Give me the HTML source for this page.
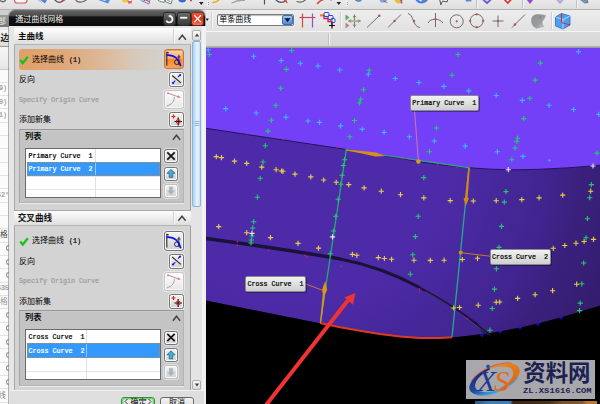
<!DOCTYPE html>
<html lang="zh"><head><meta charset="utf-8"><title>通过曲线网格</title>
<style>
html,body{margin:0;padding:0;}
body{width:600px;height:404px;overflow:hidden;position:relative;background:#dcdcdc;font-family:"Liberation Sans",sans-serif;}
.a{position:absolute;}
.m{position:absolute;font-family:"Liberation Mono",monospace;font-size:6.67px;line-height:8px;white-space:pre;color:#000;-webkit-text-stroke:.22px currentColor;}
.btn{position:absolute;box-sizing:border-box;border:1px solid #747474;border-radius:2.5px;background:linear-gradient(#f4f4f4,#d2d2d2);box-shadow:inset 0 0 0 1px #fafafa,0 0 0 1px rgba(255,255,255,.45);}
.hdr{position:absolute;box-sizing:border-box;background:linear-gradient(#fdfdfd 0%,#f0f0f0 45%,#dedede 100%);border-bottom:1px solid #b4b4b4;}
.grp{position:absolute;box-sizing:border-box;border:1px solid #b4b4b4;border-top-color:#989898;border-left-color:#a4a4a4;background:linear-gradient(#cbcbcb 0px,#c4c4c4 2px,#c3c3c3 100%);}
.list{position:absolute;box-sizing:border-box;border:1px solid #6a6a6a;background:#fff;}
.sel{position:absolute;background:#3399ff;outline:1px dotted #c98a3a;outline-offset:-1px;}
.lbl{position:absolute;box-sizing:border-box;border:1px solid #8a8a8a;border-radius:2px;background:linear-gradient(#f2f2f2,#cfcfcf);box-shadow:1px 1px 0 rgba(0,0,0,.35);}
svg text.cj{font-family:"Liberation Sans","Noto Sans CJK SC",sans-serif;}
</style></head><body>

<div class="a" style="left:0;top:0;width:600px;height:9px;background:linear-gradient(#e9e9e9,#dedede);"></div>
<div class="a" style="left:0;top:9px;width:600px;height:1px;background:#b4b4b4;"></div>
<div class="a" style="left:0;top:10px;width:600px;height:21px;background:linear-gradient(#ededed,#e1e1e1);"></div>
<div class="a" style="left:0;top:31px;width:600px;height:1px;background:#f6f6f6;"></div>
<div class="a" style="left:0;top:32px;width:600px;height:14px;background:linear-gradient(#dedede,#d6d6d6);"></div>
<div class="a" style="left:0;top:46px;width:600px;height:2px;background:linear-gradient(#bdbdbd,#8f8f8f);"></div>
<svg class="a" style="left:0;top:0" width="600" height="404" viewBox="0 0 600 404">
<defs><clipPath id="vp"><rect x="206" y="48" width="394" height="356"/></clipPath><radialGradient id="dp" cx="300" cy="150" r="330" gradientUnits="userSpaceOnUse"><stop offset="0" stop-color="#4d2ba8"/><stop offset="0.44" stop-color="#4d2ba8"/><stop offset="0.576" stop-color="#48289e"/><stop offset="0.758" stop-color="#41248f"/><stop offset="0.864" stop-color="#3a207c"/><stop offset="1" stop-color="#341d70"/></radialGradient></defs>
<g clip-path="url(#vp)">
<rect x="206" y="48" width="394" height="356" fill="#7340f8"/>
<path d="M206 128.3 L345 149.3 L384 155.5 L418 161.5 L445 165.3 L470 167.8 L490 169.2 L515 169.8 L540 169.3 L570 167.7 L600 165.2 L600 404 L206 404 Z" fill="url(#dp)"/>
<path d="M206 128.3 L345 149.3 L384 155.5 L418 161.5 L445 165.3 L470 167.8 L490 169.2 L515 169.8 L540 169.3 L570 167.7 L600 165.2" fill="none" stroke="#241458" stroke-width="1"/>
<path d="M206 300.5 L260 311.2 L320 323.2 L340 327.6 L360 331 L380 334.4 L400 337 L420 338.3 L440 338.2 L452 337.6 L470 335.6 L490 333 L520 327.6 L540 323 L560 317.6 L580 311.8 L600 305.5 L600 404 L206 404 Z" fill="#000"/>
<path d="M206 238.5 C250 244.5 300 252 340 258.9" fill="none" stroke="#1a1238" stroke-width="3.4"/>
<path d="M339 258.7 C370 264.5 395 274 420 287.7" fill="none" stroke="#1a1238" stroke-width="3"/>
<path d="M419 287.2 C440 298.5 460 311 478 325" fill="none" stroke="#1c143c" stroke-width="2.4"/>
<path d="M476 323.4 L490.5 335.2 L484 333.2 Z" fill="#1c143c" stroke="#1c143c" stroke-width="1.2" stroke-linejoin="round"/>
<path d="M425 291.5 C445 302.5 462 314 486 333.3" fill="none" stroke="#5c5490" stroke-width=".7" opacity=".8"/>
<path d="M320 323 L340 327.3 L360 330.8 L380 334 L400 336.6 L420 337.9 L440 337.9 L452 337.3" fill="none" stroke="#dc3a22" stroke-width="2"/>
<path d="M345.5 149.5 L470 167.8" fill="none" stroke="#2fa878" stroke-width="1.2"/>
<path d="M346.3 150 L320.5 322" fill="none" stroke="#1fae6e" stroke-width="1.3"/>
<path d="M469 168 L452 337" fill="none" stroke="#1fae8a" stroke-width="1.3"/>
<path d="M346 149.4 L362 151 L376 152.4 L385 155.9 L375.5 156.6 L362 153.4 L346 150.6 Z" fill="#d89018"/>
<path d="M468.2 168 L469.8 168 L467.6 198 L469 198 L465.6 206.5 L463.6 198 L465 198 Z" fill="#d08a18"/>
<path d="M325.2 281 L327.2 290 L325 294 L321.2 322.5 L320 322.5 L322.8 294 L322 290 Z" fill="#d8981a"/>
<circle cx="418.4" cy="161.5" r="2.2" fill="#d8a018"/>
<circle cx="460.8" cy="252.5" r="2" fill="#d89018"/>
<path d="M414.5 110 L418.3 160" stroke="#c878a8" stroke-width="1" fill="none"/>
<path d="M461 252.7 L490 256.2" stroke="#c07838" stroke-width="1" fill="none"/>
<path d="M306 284 L323 290.5" stroke="#c07838" stroke-width="1" fill="none"/>
<path d="M205.6 50h5.2M208.2 47.4v5.2M251.1 56.3h5.2M253.7 53.7v5.2M278.6 60.5h5.2M281.2 57.9v5.2M297.7 63.3h5.2M300.3 60.7v5.2M315.4 66h5.2M318 63.4v5.2M337.2 70h5.2M339.8 67.4v5.2M223.1 108.6h5.2M225.7 106v5.2M253.6 113h5.2M256.2 110.4v5.2M283.3 117.2h5.2M285.9 114.6v5.2M305.4 121h5.2M308 118.4v5.2M316.9 122.4h5.2M319.5 119.8v5.2M338 125.9h5.2M340.6 123.3v5.2M365.7 74.3h5.2M368.3 71.7v5.2M392.7 78.5h5.2M395.3 75.9v5.2M416.3 82.5h5.2M418.9 79.9v5.2M441.3 86.4h5.2M443.9 83.8v5.2M466.2 90.9h5.2M468.8 88.3v5.2M359.6 129.1h5.2M362.2 126.5v5.2M381.5 132.4h5.2M384.1 129.8v5.2M406.7 136.8h5.2M409.3 134.2v5.2M431.7 141h5.2M434.3 138.4v5.2M462.6 146.1h5.2M465.2 143.5v5.2M575.9 51.7h5.2M578.5 49.1v5.2M493.6 95.5h5.2M496.2 92.9v5.2M519.7 100.4h5.2M522.3 97.8v5.2M546.5 105.3h5.2M549.1 102.7v5.2M571 109.5h5.2M573.6 106.9v5.2M596.2 114.4h5.2M598.8 111.8v5.2M494.7 151.7h5.2M497.3 149.1v5.2M520.4 156.4h5.2M523 153.8v5.2" stroke="#38b8f8" stroke-width="1.1" fill="none"/>
<path d="M206.7 54.5h5.2M209.3 51.9v5.2M289.1 50.5h5.2M291.7 47.9v5.2M283.7 69.4h5.2M286.3 66.8v5.2M278.1 88.3h5.2M280.7 85.7v5.2M273.2 105.3h5.2M275.8 102.7v5.2M268.8 120.3h5.2M271.4 117.7v5.2M265.4 131.1h5.2M268 128.5v5.2M262.7 145.7h5.2M265.3 143.1v5.2M260.4 162h5.2M263 159.4v5.2M257.6 178.3h5.2M260.2 175.7v5.2M254.8 197.2h5.2M257.4 194.6v5.2M455.4 54.5h5.2M458 51.9v5.2M366.6 70.3h5.2M369.2 67.7v5.2M449.4 75.2h5.2M452 72.6v5.2M361 89.7h5.2M363.6 87.1v5.2M358 99.3h5.2M360.6 96.7v5.2M356.8 103h5.2M359.4 100.4v5.2M351.9 120.5h5.2M354.5 117.9v5.2M433.8 128h5.2M436.4 125.4v5.2M347.2 136.8h5.2M349.8 134.2v5.2M426.8 151.7h5.2M429.4 149.1v5.2M421.2 177.6h5.2M423.8 175v5.2M537.7 63.1h5.2M540.3 60.5v5.2M532.5 80.1h5.2M535.1 77.5v5.2M527.2 98.3h5.2M529.8 95.7v5.2M521.1 118.6h5.2M523.7 116v5.2M515 138.2h5.2M517.6 135.6v5.2M514.3 141.5h5.2M516.9 138.9v5.2M512.5 148h5.2M515.1 145.4v5.2M509.2 159.7h5.2M511.8 157.1v5.2M594.4 153.1h5.2M597 150.5v5.2M503.4 191.6h5.2M506 189v5.2M501.7 202.1h5.2M504.3 199.5v5.2M588.8 184.6h5.2M591.4 182v5.2M587.1 197.7h5.2M589.7 195.1v5.2M341.9 159.7h5.2M344.5 157.1v5.2M340.7 165.5h5.2M343.3 162.9v5.2M339.5 175.3h5.2M342.1 172.7v5.2M338.1 184.2h5.2M340.7 181.6v5.2M335.6 199.3h5.2M338.2 196.7v5.2M333.2 216.3h5.2M335.8 213.7v5.2M330.9 231h5.2M333.5 228.4v5.2M327.6 253.7h5.2M330.2 251.1v5.2M251.1 221.7h5.2M253.7 219.1v5.2M250.1 228h5.2M252.7 225.4v5.2M249.4 236h5.2M252 233.4v5.2M248.8 240h5.2M251.4 237.4v5.2M248.4 243h5.2M251 240.4v5.2M415.6 216.3h5.2M418.2 213.7v5.2M412.8 236.6h5.2M415.4 234v5.2M410.2 254.8h5.2M412.8 252.2v5.2M407.7 274.2h5.2M410.3 271.6v5.2M498.9 226.4h5.2M501.5 223.8v5.2M496.4 247.4h5.2M499 244.8v5.2M493.8 268.8h5.2M496.4 266.2v5.2M491.9 289.1h5.2M494.5 286.5v5.2M584.8 218.7h5.2M587.4 216.1v5.2M583.4 237.8h5.2M586 235.2v5.2M581.1 263h5.2M583.7 260.4v5.2M579.2 283.8h5.2M581.8 281.2v5.2M489.6 308.5h5.2M492.2 305.9v5.2M487.3 330.2h5.2M489.9 327.6v5.2M577.6 303.1h5.2M580.2 300.5v5.2M576.9 310.6h5.2M579.5 308v5.2" stroke="#22c870" stroke-width="1.1" fill="none"/>
<path d="M213.7 156.6h5.2M216.3 154v5.2M218.9 157.6h5.2M221.5 155v5.2M231.9 161.1h5.2M234.5 158.5v5.2M244.1 163.4h5.2M246.7 160.8v5.2M259.2 167.1h5.2M261.8 164.5v5.2M273.5 169.7h5.2M276.1 167.1v5.2M278.9 171h5.2M281.5 168.4v5.2M280.4 171.3h5.2M283 168.7v5.2M292.4 174.1h5.2M295 171.5v5.2M308.2 176.9h5.2M310.8 174.3v5.2M321.1 180h5.2M323.7 177.4v5.2M333.6 182.3h5.2M336.2 179.7v5.2M346.1 184.6h5.2M348.7 182v5.2M361.5 187.9h5.2M364.1 185.3v5.2M378.7 191.2h5.2M381.3 188.6v5.2M397.9 194.7h5.2M400.5 192.1v5.2M421.2 197.9h5.2M423.8 195.3v5.2M447.6 200.6h5.2M450.2 198v5.2M470.7 201h5.2M473.3 198.4v5.2M493.6 200.7h5.2M496.2 198.1v5.2M519.2 199.6h5.2M521.8 197v5.2M536.5 197.9h5.2M539.1 195.3v5.2M560.1 195.1h5.2M562.7 192.5v5.2M588.1 191.2h5.2M590.7 188.6v5.2M216.1 226.6h5.2M218.7 224v5.2M244.1 232.7h5.2M246.7 230.1v5.2M267.9 237.6h5.2M270.5 235v5.2M295.4 243.4h5.2M298 240.8v5.2M315.9 248.1h5.2M318.5 245.5v5.2M349.8 254.4h5.2M352.4 251.8v5.2M354.2 255.3h5.2M356.8 252.7v5.2M375.7 257.6h5.2M378.3 255v5.2M381.8 258.5h5.2M384.4 255.9v5.2M389 259.3h5.2M391.6 256.7v5.2M411.4 260.2h5.2M414 257.6v5.2M427.7 260.4h5.2M430.3 257.8v5.2M441.5 260.2h5.2M444.1 257.6v5.2M459.7 259.5h5.2M462.3 256.9v5.2M474.9 258.3h5.2M477.5 255.7v5.2M550.7 248.3h5.2M553.3 245.7v5.2M562.2 245.5h5.2M564.8 242.9v5.2M573.4 243.2h5.2M576 240.6v5.2M581.5 241.5h5.2M584.1 238.9v5.2M590.9 239.4h5.2M593.5 236.8v5.2M451.1 308h5.2M453.7 305.4v5.2M457 307.5h5.2M459.6 304.9v5.2M475.6 305.2h5.2M478.2 302.6v5.2M493.6 302.2h5.2M496.2 299.6v5.2M497.1 302h5.2M499.7 299.4v5.2M515 298.4h5.2M517.6 295.8v5.2M532.5 294.7h5.2M535.1 292.1v5.2M550 290.7h5.2M552.6 288.1v5.2M574.1 284.2h5.2M576.7 281.6v5.2" stroke="#e8d040" stroke-width="1.1" fill="none"/>
<path d="M505.7 169.7h5.2M508.3 167.1v5.2M590.4 166h5.2M593 163.4v5.2M249.4 233.4h5.2M252 230.8v5.2M329.9 236.9h5.2M332.5 234.3v5.2" stroke="#e8e4f0" stroke-width="1.1" fill="none"/>
<path d="M480 335h4M482 333v4M498 331.5h4M500 329.5v4M518 327.6h4M520 325.6v4M536 323.7h4M538 321.7v4M559 317.8h4M561 315.8v4" stroke="#1818d8" stroke-width="1.1" fill="none"/>
<path d="M548.2 160.4h2.4M549.4 159.2v2.4" stroke="#38b8f8" stroke-width="1.1" fill="none"/>
<rect x="246.4" y="133" width="1.4" height="1.4" fill="#d02068"/><rect x="282.4" y="138.6" width="1.4" height="1.4" fill="#d02068"/><rect x="336.4" y="146.4" width="1.4" height="1.4" fill="#d02068"/><rect x="404.4" y="157.9" width="1.4" height="1.4" fill="#d02068"/><rect x="437.4" y="164.4" width="1.4" height="1.4" fill="#d02068"/><rect x="456.4" y="166.9" width="1.4" height="1.4" fill="#d02068"/><rect x="471.5" y="163" width="1.4" height="1.4" fill="#d02068"/><rect x="236.70000000000002" y="241.20000000000002" width="1.4" height="1.4" fill="#d02068"/><rect x="236.70000000000002" y="244.6" width="1.4" height="1.4" fill="#d02068"/><rect x="267.79999999999995" y="249.6" width="1.4" height="1.4" fill="#d02068"/><rect x="304.4" y="254.6" width="1.4" height="1.4" fill="#d02068"/><rect x="306.4" y="256.2" width="1.4" height="1.4" fill="#d02068"/><rect x="340.4" y="265.4" width="1.4" height="1.4" fill="#d02068"/><rect x="418.9" y="288.4" width="1.4" height="1.4" fill="#d02068"/><rect x="466.4" y="317.9" width="1.4" height="1.4" fill="#d02068"/><rect x="418.9" y="290.9" width="1.4" height="1.4" fill="#d02068"/>
<path d="M265 406.4 L347.8 300.5" stroke="#f03434" stroke-width="4" fill="none"/>
<path d="M355.4 293 L344.3 297.6 L353 304.8 Z" fill="#f03434"/>
</g></svg>
<div class="lbl" style="left:409.8px;top:95.2px;width:68.8px;height:15.8px;"></div><div class="m" style="left:412.3px;top:99.2px;">Primary Curve  1</div>
<div class="lbl" style="left:489.6px;top:248.5px;width:61.2px;height:16px;"></div><div class="m" style="left:492.1px;top:252.5px;">Cross Curve  2</div>
<div class="lbl" style="left:245px;top:276.2px;width:61.2px;height:16px;"></div><div class="m" style="left:247.5px;top:280.2px;">Cross Curve  1</div>
<div class="a" style="left:217px;top:14px;width:77px;height:12px;box-sizing:border-box;border:1px solid #7a7a7a;border-radius:2px;background:#fff;box-shadow:inset 0 1px 1px #bbb;"></div>
<div class="a" style="left:282px;top:15px;width:11px;height:10px;box-sizing:border-box;border:1px solid #3a6ab8;border-radius:2px;background:linear-gradient(#9cc4f4,#4a8ce0);"></div>
<svg class="a" style="left:0;top:0" width="600" height="48" viewBox="0 0 600 48">
<path d="M284.5 18.2h6l-3 4z" fill="#111"/>
<text class="cj" x="219.3" y="22.4" font-size="8" fill="#000">单条曲线</text>
<path d="M205.5 18.5h3.4l-1.7 2.6z" fill="#222"/>
<path d="M211.5 12v17M340.5 12v17M551.5 12v17" stroke="#cfcfcf" stroke-width="1"/><path d="M212.5 12v17M341.5 12v17M552.5 12v17" stroke="#f8f8f8" stroke-width="1"/>
<path d="M328.5 33v12M476.5 0v8M522.5 0v8M576.5 0v8" stroke="#c0c0c0"/><path d="M329.5 33v12M477.5 0v8M523.5 0v8M577.5 0v8" stroke="#f4f4f4"/>
<path d="M302.5 13.5v14" stroke="#e04030" stroke-width="1.2"/><path d="M312.5 13.5v14" stroke="#8858b8" stroke-width="1.2"/><path d="M299.5 17.5h16" stroke="#c04870" stroke-width="1.2"/>
<path d="M320 15.5h4v3h4v3h4v5" stroke="#e02020" stroke-width="1.3" fill="none"/><rect x="324" y="12.5" width="5" height="4" rx="1" fill="none" stroke="#2848e0"/><rect x="328" y="15.5" width="5" height="4" rx="1" fill="none" stroke="#2848e0"/><rect x="331" y="18.5" width="4" height="4" rx="1" fill="none" stroke="#2848e0"/><path d="M329 25.5h6M332 22.5v6" stroke="#111" stroke-width="1.2"/><path d="M320 15h3" stroke="#f0a020" stroke-width="1.5"/>
<path d="M345.5 14.5l4 3l-4 3z" fill="#58a868"/><path d="M345.5 22.5l4 3l-4 3z" fill="#b08888"/>
<path d="M354.5 15.8l5.2 5.2l-5.2 5.2l-5.2-5.2z" fill="none" stroke="#7a7a7a" stroke-width="1" stroke-dasharray="4.5 2.85" stroke-dashoffset="2.2"/><path d="M348 21h13M354.5 14.5v13" stroke="#7a7a7a" stroke-width="1"/><rect x="353.3" y="19.8" width="2.4" height="2.4" fill="#c8b060"/>
<path d="M367 27.5l12.5-12" stroke="#6e6e6e" stroke-width="1"/><circle cx="379.3" cy="15.8" r="1.2" fill="#b05050"/>
<path d="M388 27.5l13-13" stroke="#6e6e6e" stroke-width="1"/><circle cx="394.5" cy="21" r="1.2" fill="#b05050"/>
<path d="M408 13.5c6 1 4 13 12 14" stroke="#6e6e6e" stroke-width="1" fill="none"/><circle cx="414" cy="21" r="1.2" fill="#b05050"/>
<path d="M435.5 13v14M428 23c2-5 12-5 15 0" stroke="#6e6e6e" stroke-width="1" fill="none"/><circle cx="435.5" cy="19" r="1.1" fill="#b05050"/>
<circle cx="456.7" cy="21.3" r="6.5" fill="none" stroke="#6e6e6e"/><circle cx="456.7" cy="21.3" r="1.1" fill="#b05050"/>
<circle cx="476.7" cy="20.8" r="6.5" fill="none" stroke="#6e6e6e"/><circle cx="476.7" cy="14.3" r="1.1" fill="#b05050"/><circle cx="476.7" cy="27.3" r="1.1" fill="#b05050"/><circle cx="470.2" cy="20.8" r="1.1" fill="#b05050"/><circle cx="483.2" cy="20.8" r="1.1" fill="#b05050"/>
<path d="M492.5 21h11M498 15.5v11.5" stroke="#6e6e6e" stroke-width="1"/><circle cx="498" cy="21" r="1.1" fill="#b05050"/>
<path d="M512 27.5l13-13" stroke="#6e6e6e"/><circle cx="515" cy="24.5" r="1.2" fill="#b05050"/>
<defs><linearGradient id="sf" x1="0" y1="0" x2="1" y2="1"><stop offset="0" stop-color="#8a9096"/><stop offset=".6" stop-color="#9a9ea2"/><stop offset="1" stop-color="#d4d6d8"/></linearGradient></defs><path d="M531.5 20.5C531.5 15 536 13.3 545.5 15.5L543.8 19.5Q540.5 22 543.5 26.5L536.5 28.2Q531.5 26.5 531.5 20.5Z" fill="url(#sf)" stroke="#8a8e92" stroke-width=".5"/><circle cx="540.3" cy="17.2" r="1" fill="#c06050"/>
<path d="M555.5 17l6-3.5l8.5 2.5v9l-7 4l-7.5-3z" fill="#4aa0f0" stroke="#2868c8" stroke-width=".8"/><path d="M555.5 17l7.5 2.5v9.5" fill="none" stroke="#bfe0ff" stroke-width=".8"/><path d="M563 19.5l7-3.5" stroke="#bfe0ff" stroke-width=".8"/><path d="M561.5 13.5v9l8.5 2.5" fill="none" stroke="#e02828" stroke-width="1"/>
<g fill="none" stroke-linecap="round" transform="translate(0 -1)" opacity=".9"><path d="M0 1.5q3 2.5 5.5 0" stroke="#555" stroke-width="1.2"/><rect x="14.5" y="-6" width="12.5" height="10" rx="2.5" fill="#fafafa" stroke="#d04848" stroke-width="1.2"/><path d="M39 0h8.5l-2.5 4.5z" fill="#3a78d8" stroke="none"/><path d="M37 0l4 3" stroke="#9ab" stroke-width="1"/><path d="M55 1q4 4.5 8 .5" stroke="#444" stroke-width="1.2"/><path d="M62 2.5l5-3" stroke="#d83030" stroke-width="1.3"/><path d="M76 1.5q5 4 11.5-1.5" stroke="#555" stroke-width="1.2"/><path d="M96 0h14.5l-2.5 4.5l-7-2.5z" fill="#3a88e0" stroke="none"/><path d="M99 0h8l-2 2z" fill="#e8f0fa" stroke="none"/><path d="M121 0h8v3.5h-6z" fill="#f0c830" stroke="none"/><path d="M127 0h5.5l-1 4.5h-3z" fill="#e85050" stroke="none"/><path d="M128.5 0h3v2h-3z" fill="#fff" stroke="none"/><path d="M140 0h10l-1 5l-7-3z" fill="#f0f0f4" stroke="#4a5a98" stroke-width=".8"/><path d="M141 0h5l-1 2.5z" fill="#3868d0" stroke="none"/><path d="M146.5 1.5l2.5 1" stroke="#d83030" stroke-width="1.2"/><path d="M158 0h7l-1 3.5l-5-1.5zM165.5 0h7l-1.5 5l-5-2z" fill="#f6f8f6" stroke="#4a5a5a" stroke-width=".8"/><path d="M167 1l3 1.5" stroke="#58a868" stroke-width="1"/><path d="M178 0h8.5q-.5 3.5-4.2 3.5q-3.8 0-4.3-3.5z" fill="#2858d8" stroke="none"/><circle cx="191" cy="1.5" r="1" fill="#e03030" stroke="none"/><path d="M213 3.5q4.5-.5 6.5-3.5h4.5" stroke="#e8b020" stroke-width="1.8"/><path d="M232 4q6-3.5 12.5-2.5" stroke="#9a9a9a" stroke-width="1.2"/><path d="M264.5 .5v4.5" stroke="#444" stroke-width="1.2"/><path d="M276 1q5 4.5 10 .5" stroke="#444" stroke-width="1.2"/><path d="M283.5 0l3.5 3.5" stroke="#e03030" stroke-width="1.2"/><path d="M297 2.5q5 2 9.5-2.5" stroke="#555" stroke-width="1.2"/><path d="M317.5 4.5q2-3 7-4.5" stroke="#e03838" stroke-width="1.6"/><circle cx="331" cy="1" r=".8" fill="#e03030" stroke="none"/><path d="M355 0h7.5q-1 3-4 3q-2.5 0-3.5-3z" fill="#3888d8" stroke="none"/><circle cx="356" cy="1" r="1" fill="#e04040" stroke="none"/><path d="M379 0h9l-3 3.5h-4z" fill="#7898d0" stroke="none"/><path d="M384 2l3 1.5" stroke="#667" stroke-width="1"/><path d="M394 0h8.5l-1 4l-3.5 .5l-3-2z" fill="#e8b828" stroke="none"/><path d="M399 0h3.5l-.5 3.5z" fill="#4060c8" stroke="none"/><circle cx="401.5" cy="3.5" r="1" fill="#e03030" stroke="none"/><path d="M415 0h13q-1 4-6 4.5q-5 0-7-4.5z" fill="#3878e0" stroke="none"/><path d="M417 0h6l-2 2.5z" fill="#f0f4fa" stroke="none"/><path d="M424.5 0q2 2 3.5 0" stroke="#e03030" stroke-width="1.3"/><path d="M440 0h8l-1 3l-4.5-1l-1.5 3.5z" fill="#f4f4f4" stroke="#333" stroke-width=".9"/><path d="M465 0h7l-1 2.5h-5z" fill="#5080d8" stroke="none"/><path d="M482.5 0l4.5 4l4.5-4" stroke="#5848c8" stroke-width="1.8"/><path d="M484 0h6l-3 2.5z" fill="#d8d0f0" stroke="none"/><path d="M504 0l3.8 4l3.8-4" stroke="#d82828" stroke-width="1.8"/><path d="M505.5 0h4.5l-2.2 2z" fill="#fff" stroke="none"/><path d="M526 0h8l-4 5z" fill="#b030d0" stroke="none"/><path d="M529 1.5l4-1.5" stroke="#3858d8" stroke-width="1.2"/><path d="M556 0l4 4.5l4-4.5z" fill="#b8b0e0" stroke="#8880c8" stroke-width=".8"/><path d="M580 0h7l1 3.5l-3 .5z" fill="#6888b8" stroke="#456" stroke-width=".7"/></g>
<path d="M336.5 2h4.5l-2.2 3zM199 2h4.5l-2.2 3z" fill="#222"/>
<path d="M207.5 1v1M207.5 3v1M207.5 5v1M346.5 1v1M346.5 3v1M346.5 5v1" stroke="#fff" stroke-width="1.5"/><path d="M208.5 2v1M208.5 4v1M347.5 2v1M347.5 4v1" stroke="#999" stroke-width="1"/>
</svg>
<div class="a" style="left:0;top:10px;width:10px;height:5px;background:#cfcfcf;"></div>
<div class="a" style="left:0;top:15px;width:10px;height:12px;background:linear-gradient(#9a9a9a,#777);"></div>
<div class="a" style="left:0;top:27px;width:10px;height:3px;background:#e8e8e8;"></div>
<div class="a" style="left:0;top:30px;width:10px;height:17px;background:linear-gradient(#f4f4f4,#dcdcdc);border-bottom:1px solid #999;box-sizing:border-box;"></div>
<div class="a" style="left:0;top:47px;width:10px;height:357px;background:#fbfbfb;"></div>
<div class="a" style="left:0;top:47px;width:10px;height:22px;background:linear-gradient(#f6f6f6,#e6e6e6);border-bottom:1px solid #c8c8c8;"></div>
<div class="a" style="left:0;top:81.7px;width:9px;height:1px;background:#e2e2e2;"></div>
<div class="a" style="left:0;top:95px;width:9px;height:1px;background:#e2e2e2;"></div>
<div class="a" style="left:0;top:108.4px;width:9px;height:1px;background:#e2e2e2;"></div>
<div class="a" style="left:0;top:121.7px;width:9px;height:1px;background:#e2e2e2;"></div>
<div class="a" style="left:0;top:135px;width:9px;height:1px;background:#e2e2e2;"></div>
<div class="a" style="left:0;top:148.4px;width:9px;height:1px;background:#e2e2e2;"></div>
<div class="a" style="left:0;top:161.7px;width:9px;height:1px;background:#e2e2e2;"></div>
<div class="a" style="left:0;top:175px;width:9px;height:1px;background:#e2e2e2;"></div>
<div class="a" style="left:0;top:188.4px;width:9px;height:1px;background:#e2e2e2;"></div>
<div class="a" style="left:0;top:201.7px;width:9px;height:1px;background:#e2e2e2;"></div>
<div class="a" style="left:0;top:215px;width:9px;height:1px;background:#e2e2e2;"></div>
<div class="a" style="left:0;top:228.4px;width:9px;height:1px;background:#e2e2e2;"></div>
<div class="a" style="left:0;top:241.7px;width:9px;height:1px;background:#e2e2e2;"></div>
<div class="a" style="left:0;top:255px;width:9px;height:1px;background:#e2e2e2;"></div>
<div class="a" style="left:0;top:268.4px;width:9px;height:1px;background:#e2e2e2;"></div>
<div class="a" style="left:0;top:281.7px;width:9px;height:1px;background:#e2e2e2;"></div>
<div class="a" style="left:0;top:295px;width:9px;height:1px;background:#e2e2e2;"></div>
<div class="a" style="left:0;top:308.4px;width:9px;height:1px;background:#e2e2e2;"></div>
<div class="a" style="left:0;top:321.7px;width:9px;height:1px;background:#e2e2e2;"></div>
<div class="a" style="left:0;top:335px;width:9px;height:1px;background:#e2e2e2;"></div>
<div class="a" style="left:0;top:348.4px;width:9px;height:1px;background:#e2e2e2;"></div>
<div class="a" style="left:0;top:361.7px;width:9px;height:1px;background:#e2e2e2;"></div>
<div class="a" style="left:0;top:375px;width:9px;height:1px;background:#e2e2e2;"></div>
<div class="a" style="left:0;top:388.4px;width:9px;height:1px;background:#e2e2e2;"></div>
<div class="a" style="left:0;top:401.7px;width:9px;height:1px;background:#e2e2e2;"></div>
<svg class="a" style="left:0;top:0" width="10" height="404" viewBox="0 0 10 404">
<text class="cj" x="-1.8" y="23.8" font-size="7.6" fill="#eee">部</text>
<text class="cj" x="0.4" y="41.2" font-size="9" font-weight="bold" fill="#222">边</text>
<text class="cj" x="0.1" y="237.3" font-size="7.8" fill="#444">格</text>
<text class="cj" x="0.1" y="304.3" font-size="7.8" fill="#999">格</text>
<text class="cj" x="-1.8" y="398.3" font-size="7.6" fill="#888">线</text>
</svg>
<div class="m" style="left:-1px;top:84.3px;color:#9a9a9a;">9)</div>
<div class="m" style="left:-1px;top:97.7px;color:#9a9a9a;">0)</div>
<div class="m" style="left:-1px;top:111px;color:#9a9a9a;">1)</div>
<div class="m" style="left:-3px;top:191px;color:#9a9a9a;">52'</div>
<div class="m" style="left:-3px;top:284.3px;color:#9a9a9a;">535</div>
<div class="a" style="left:6px;top:245.3px;width:5px;height:6px;border:1px solid #999;border-right:none;border-radius:3px 0 0 3px;box-sizing:border-box;"></div>
<div class="a" style="left:6px;top:258.7px;width:5px;height:6px;border:1px solid #999;border-right:none;border-radius:3px 0 0 3px;box-sizing:border-box;"></div>
<div class="a" style="left:6px;top:272px;width:5px;height:6px;border:1px solid #999;border-right:none;border-radius:3px 0 0 3px;box-sizing:border-box;"></div>
<div class="a" style="left:6px;top:312px;width:5px;height:6px;border:1px solid #999;border-right:none;border-radius:3px 0 0 3px;box-sizing:border-box;"></div>
<div class="a" style="left:6px;top:325.3px;width:5px;height:6px;border:1px solid #999;border-right:none;border-radius:3px 0 0 3px;box-sizing:border-box;"></div>
<div class="a" style="left:6px;top:338.7px;width:5px;height:6px;border:1px solid #999;border-right:none;border-radius:3px 0 0 3px;box-sizing:border-box;"></div>
<div class="a" style="left:6px;top:352px;width:5px;height:6px;border:1px solid #999;border-right:none;border-radius:3px 0 0 3px;box-sizing:border-box;"></div>
<div class="a" style="left:6px;top:365.3px;width:5px;height:6px;border:1px solid #999;border-right:none;border-radius:3px 0 0 3px;box-sizing:border-box;"></div>
<div class="a" style="left:6px;top:378.7px;width:5px;height:6px;border:1px solid #999;border-right:none;border-radius:3px 0 0 3px;box-sizing:border-box;"></div>
<div class="a" style="left:9px;top:10px;width:196px;height:394px;background:#e6e6e6;border-radius:6px 6px 0 0;box-shadow:0 0 0 1px rgba(120,120,120,.55);"></div>
<div class="a" style="left:204px;top:26px;width:1.5px;height:378px;background:#f0f0f0;"></div>
<div class="a" style="left:9px;top:10px;width:196px;height:16px;border-radius:6px 6px 0 0;background:linear-gradient(#747474 0,#5e5e5e 1.5px,#4c4c4c 5.5px,#141414 7px,#0a0a0a 100%);"></div>
<div class="a" style="left:164.2px;top:13px;width:11px;height:11.5px;border-radius:2px;background:linear-gradient(#6a6a6a,#3a3a3a);box-shadow:0 0 0 1px #2a2a2a;"></div>
<div class="a" style="left:177.5px;top:13px;width:12px;height:11.5px;border-radius:2px;background:linear-gradient(#6a6a6a,#3a3a3a);box-shadow:0 0 0 1px #2a2a2a;"></div>
<div class="a" style="left:192px;top:13px;width:11px;height:11.5px;border-radius:2px;background:linear-gradient(#ec5a3c 0,#e23414 45%,#e8482c 70%,#f07a62 100%);box-shadow:0 0 0 .8px #8a2a18;"></div>
<div class="a" style="left:14px;top:28px;width:177px;height:362px;background:#d3d3d3;border-left:1px solid #a8a8a8;border-right:1px solid #a0a0a0;box-sizing:border-box;"></div>
<div class="hdr" style="left:14px;top:28px;width:177px;height:17px;"></div>
<div class="a" style="left:14px;top:209.5px;width:177px;height:1px;background:#a8a8a8;"></div>
<div class="hdr" style="left:14px;top:210.5px;width:177px;height:15.5px;"></div>
<div class="a" style="left:19px;top:48.5px;width:150px;height:21px;border-radius:3px 0 0 3px;background:linear-gradient(90deg,#e0a068 0,#e0a878 30%,#dcb898 55%,#d8c8b8 76%,#d3d3d3 100%);"></div>
<div class="btn" style="left:164px;top:49px;width:20px;height:20px;border-color:#c47a3c;background:linear-gradient(#fcd4b0 0,#f9b07a 46%,#f48630 52%,#f9a458 100%);box-shadow:inset 0 0 0 1px #f8a060;border-radius:3px;"></div>
<div class="btn" style="left:169px;top:72px;width:15px;height:15px;"></div>
<div class="btn" style="left:164px;top:89.5px;width:19.5px;height:19px;border-color:#c4c4c4;background:linear-gradient(#fff,#e6e6e6);"></div>
<div class="btn" style="left:169px;top:112px;width:15px;height:15px;"></div>
<div class="grp" style="left:19px;top:129px;width:165px;height:74px;"></div>
<div class="a" style="left:19px;top:203px;width:165px;height:1px;background:#ececec;"></div>
<div class="list" style="left:25px;top:148px;width:136px;height:50px;"></div>
<div class="a" style="left:26px;top:162px;width:134px;height:1px;background:#e6e6e6;"></div>
<div class="a" style="left:26px;top:175.5px;width:134px;height:1px;background:#e6e6e6;"></div>
<div class="a" style="left:26px;top:189px;width:134px;height:1px;background:#e6e6e6;"></div>
<div class="a" style="left:95px;top:149px;width:1px;height:48px;background:#e0e0e0;"></div>
<div class="sel" style="left:26.5px;top:162px;width:133px;height:14px;"></div>
<div class="a" style="left:95px;top:163px;width:1px;height:12px;background:#9cc8f4;"></div>
<div class="m" style="left:28.5px;top:151.5px;">Primary Curve  1</div>
<div class="m" style="left:28.5px;top:165px;color:#fff;">Primary Curve  2</div>
<div class="btn" style="left:164px;top:149px;width:14px;height:14px;"></div>
<div class="btn" style="left:164px;top:166.5px;width:14px;height:14px;"></div>
<div class="btn" style="left:164px;top:183.5px;width:14px;height:14px;border-color:#c0c0c0;"></div>
<div class="btn" style="left:164px;top:231px;width:20px;height:20px;border-radius:3px;"></div>
<div class="btn" style="left:169px;top:253.5px;width:15px;height:15px;"></div>
<div class="btn" style="left:164px;top:271.5px;width:19.5px;height:19px;border-color:#c4c4c4;background:linear-gradient(#fff,#e6e6e6);"></div>
<div class="btn" style="left:169px;top:293.5px;width:15px;height:15px;"></div>
<div class="grp" style="left:19px;top:310px;width:165px;height:75.5px;"></div>
<div class="a" style="left:19px;top:385.5px;width:165px;height:1px;background:#ececec;"></div>
<div class="list" style="left:25px;top:329px;width:136px;height:51px;"></div>
<div class="a" style="left:26px;top:343px;width:134px;height:1px;background:#e6e6e6;"></div>
<div class="a" style="left:26px;top:357px;width:134px;height:1px;background:#e6e6e6;"></div>
<div class="a" style="left:26px;top:370.5px;width:134px;height:1px;background:#e6e6e6;"></div>
<div class="a" style="left:86px;top:330px;width:1px;height:49px;background:#e0e0e0;"></div>
<div class="sel" style="left:26.5px;top:343px;width:133px;height:14.5px;"></div>
<div class="a" style="left:86px;top:344px;width:1px;height:12.5px;background:#9cc8f4;"></div>
<div class="m" style="left:28.5px;top:333px;">Cross Curve  1</div>
<div class="m" style="left:28.5px;top:346.5px;color:#fff;">Cross Curve  2</div>
<div class="btn" style="left:164px;top:330.5px;width:14px;height:14px;"></div>
<div class="btn" style="left:164px;top:348px;width:14px;height:14px;"></div>
<div class="btn" style="left:164px;top:365px;width:14px;height:14px;border-color:#c0c0c0;"></div>
<div class="m" style="left:19px;top:95.5px;color:#9c9c9c;">Specify Origin Curve</div>
<div class="m" style="left:19px;top:277px;color:#9c9c9c;">Specify Origin Curve</div>
<div class="m" style="left:69px;top:55.5px;">(1)</div>
<div class="m" style="left:69px;top:237px;">(1)</div>
<div class="a" style="left:191px;top:27px;width:13px;height:363px;background:linear-gradient(90deg,#e4e4e4 0,#e4e4e4 10.5px,#f3f3f3 10.5px);"></div>
<div class="a" style="left:191.5px;top:30px;width:9.8px;height:10.5px;box-sizing:border-box;border:1px solid #b0b0b0;border-radius:2px;background:linear-gradient(#fafafa,#dadada);"></div>
<div class="a" style="left:191.5px;top:41px;width:9.8px;height:166px;box-sizing:border-box;border:1px solid #8eb4dc;border-radius:2px;background:linear-gradient(90deg,#a8d0f4 0,#d4eafc 40%,#eaf5ff 60%,#c4e0f8 100%);"></div>
<div class="a" style="left:191.5px;top:379.5px;width:9.8px;height:10.5px;box-sizing:border-box;border:1px solid #b0b0b0;border-radius:2px;background:linear-gradient(#fafafa,#dadada);"></div>
<div class="a" style="left:10px;top:390px;width:194px;height:1px;background:#f2f2f2;"></div>
<div class="a" style="left:10px;top:391px;width:194px;height:13px;background:#dedede;"></div>
<div class="a" style="left:121px;top:396.5px;width:34px;height:12px;box-sizing:border-box;border:1px solid #3a8a3a;border-radius:3px;background:linear-gradient(#f4f4f4,#dcdcdc);box-shadow:inset 0 0 0 1.5px #78d878;"></div>
<div class="a" style="left:160px;top:396.5px;width:34px;height:12px;box-sizing:border-box;border:1px solid #6a6a6a;border-radius:3px;background:linear-gradient(#f4f4f4,#dcdcdc);"></div>
<svg class="a" style="left:0;top:0" width="210" height="404" viewBox="0 0 210 404">
<text class="cj" x="15.3" y="22" font-size="8" fill="#f4f4f4">通过曲线网格</text>
<text class="cj" x="18" y="39" font-size="8.5" font-weight="bold" fill="#111">主曲线</text>
<text class="cj" x="17.7" y="220.8" font-size="8.6" font-weight="bold" fill="#111">交叉曲线</text>
<text class="cj" x="32.1" y="61.8" font-size="8" fill="#000">选择曲线</text>
<text class="cj" x="32.1" y="243.3" font-size="8" fill="#000">选择曲线</text>
<text class="cj" x="19.1" y="82.3" font-size="8" fill="#000">反向</text>
<text class="cj" x="19.1" y="263.8" font-size="8" fill="#000">反向</text>
<text class="cj" x="19" y="122.3" font-size="8" fill="#000">添加新集</text>
<text class="cj" x="19" y="303.8" font-size="8" fill="#000">添加新集</text>
<text class="cj" x="25" y="138.9" font-size="8.3" font-weight="bold" fill="#111">列表</text>
<text class="cj" x="25" y="320.2" font-size="8.3" font-weight="bold" fill="#111">列表</text>
<text class="cj" x="130.5" y="405" font-size="8" fill="#000">确定</text>
<text class="cj" x="169" y="405" font-size="8" fill="#000">取消</text>
<path d="M125 401.5l2.5-2.5M125 401.5l2.5 2.5M151 401.5l-2.5-2.5M151 401.5l-2.5 2.5" stroke="#222" stroke-width=".9" fill="none"/>
<path d="M20.3 60l2.5 3.2l5-6.4" stroke="#18c018" stroke-width="2.3" fill="none" stroke-linejoin="miter"/>
<path d="M20.3 241.5l2.5 3.2l5-6.4" stroke="#18c018" stroke-width="2.3" fill="none" stroke-linejoin="miter"/>
<path d="M169.86 16.05A3.2 3.2 0 1 1 166.4 20.55" stroke="#f2f2f2" stroke-width="1.9" fill="none"/><path d="M170.6 14.6l-2.6 1.3l2.3 1.6z" fill="#f2f2f2"/>
<rect x="180.2" y="16.8" width="7" height="1.9" fill="#f4f4f4"/>
<path d="M194.3 15.3l6.6 6.8M200.9 15.3l-6.6 6.8" stroke="#fff" stroke-width="1.3"/>
<path d="M173.5 29v15M173.5 211.5v13" stroke="#d0d0d0"/><path d="M174.5 29v15M174.5 211.5v13" stroke="#fafafa"/>
<path d="M178.70000000000002 39.7l3.6-4.4l3.6 4.4" stroke="#444" stroke-width="1.5" fill="none"/>
<path d="M178.4 220.7l3.6-4.4l3.6 4.4" stroke="#444" stroke-width="1.5" fill="none"/>
<path d="M172.9 139.7l3.6-4.4l3.6 4.4" stroke="#444" stroke-width="1.5" fill="none"/>
<path d="M172.9 320.7l3.6-4.4l3.6 4.4" stroke="#444" stroke-width="1.5" fill="none"/>
<path d="M194.8 36.5h4.4l-2.2-3z" fill="#444"/><path d="M194.8 383.5h4.4l-2.2 3z" fill="#444"/>
<path d="M194.5 121.5h5M194.5 123.5h5M194.5 125.5h5" stroke="#7aa8d8" stroke-width=".8"/>
<path d="M166.8 51.8v13.8M166.8 52.3l2 .8" stroke="#2a2a2a" stroke-width="1.1" fill="none"/><circle cx="176.8" cy="62.2" r="2.3" fill="none" stroke="#2a2a2a" stroke-width="1"/><path d="M178.9 54.8v10.3M177.3 57h3.2" stroke="#2a2a2a" stroke-width="1"/><path d="M166.4 55.3C173 54.6 178.5 58 180.8 66.3" stroke="#1010e8" stroke-width="1.7" fill="none"/>
<path d="M166.8 233.8v13.8M166.8 234.3l2 .8" stroke="#2a2a2a" stroke-width="1.1" fill="none"/><circle cx="176.8" cy="244.2" r="2.3" fill="none" stroke="#2a2a2a" stroke-width="1"/><path d="M178.9 236.8v10.3M177.3 239h3.2" stroke="#2a2a2a" stroke-width="1"/><path d="M166.4 237.3C173 236.6 178.5 240 180.8 248.3" stroke="#1010e8" stroke-width="1.7" fill="none"/>
<path d="M172.2 75.5L180.8 82.8" stroke="#2a2a2a" stroke-width="1.1"/><path d="M172.8 83.2L175.3 80.7M177.9 77.2L180.3 74.8" stroke="#1818e0" stroke-width="1.2"/><circle cx="173" cy="83" r="1.1" fill="#1818e0"/><circle cx="180.1" cy="75" r="1.1" fill="#1818e0"/>
<path d="M172.2 257L180.8 264.3" stroke="#2a2a2a" stroke-width="1.1"/><path d="M172.8 264.7L175.3 262.2M177.9 258.7L180.3 256.3" stroke="#1818e0" stroke-width="1.2"/><circle cx="173" cy="264.5" r="1.1" fill="#1818e0"/><circle cx="180.1" cy="256.5" r="1.1" fill="#1818e0"/>
<path d="M166.7 106c5.5-1.8 7.6-4.6 7.6-9.2" stroke="#a8a0a0" stroke-width="1" fill="none"/><path d="M168 93.2l10.5 3.6" stroke="#d08888" stroke-width="1"/><path d="M180.8 97.6l-3.4.3l1.1-2.6z" fill="#d08888"/><circle cx="168" cy="93.2" r="1" fill="#d08888"/>
<path d="M166.7 288c5.5-1.8 7.6-4.6 7.6-9.2" stroke="#a8a0a0" stroke-width="1" fill="none"/><path d="M168 275.2l10.5 3.6" stroke="#d08888" stroke-width="1"/><path d="M180.8 279.6l-3.4.3l1.1-2.6z" fill="#d08888"/><circle cx="168" cy="275.2" r="1" fill="#d08888"/>
<path d="M171.5 116.5h4M173.5 114.5v4" stroke="#e02020" stroke-width="1.2"/><path d="M174.5 121.5h7.5M178.2 117.5v8" stroke="#111" stroke-width="1.2"/><circle cx="178.2" cy="121.5" r="2" fill="none" stroke="#e02020" stroke-width="1"/>
<path d="M171.5 298h4M173.5 296v4" stroke="#e02020" stroke-width="1.2"/><path d="M174.5 303h7.5M178.2 299v8" stroke="#111" stroke-width="1.2"/><circle cx="178.2" cy="303" r="2" fill="none" stroke="#e02020" stroke-width="1"/>
<path d="M167.3 152.3l7.4 7.4M174.7 152.3l-7.4 7.4" stroke="#111" stroke-width="1.7"/>
<path d="M171 169.3l4 4h-2.2v4h-3.6v-4h-2.2z" fill="#40b0d8" stroke="#205878" stroke-width=".7"/>
<path d="M171 194.8l4-4h-2.2v-4h-3.6v4h-2.2z" fill="#a8b4bc" stroke="#c0c8cc" stroke-width=".5"/>
<path d="M167.3 333.8l7.4 7.4M174.7 333.8l-7.4 7.4" stroke="#111" stroke-width="1.7"/>
<path d="M171 350.8l4 4h-2.2v4h-3.6v-4h-2.2z" fill="#40b0d8" stroke="#205878" stroke-width=".7"/>
<path d="M171 376.3l4-4h-2.2v-4h-3.6v4h-2.2z" fill="#a8b4bc" stroke="#c0c8cc" stroke-width=".5"/>
</svg>
<div class="a" style="left:466px;top:360px;width:129px;height:38.5px;background:#a8a8ac;"></div>
<div class="a" style="left:475px;top:400.5px;width:122px;height:4px;background:linear-gradient(90deg,#2c5a84 0,#3a80b8 12%,#3a80b8 29%,#3a2614 31%,#4a3018 60%,#7a5028 72%,#8a5a30 88%,#c07830 92%,#c07830 100%);"></div>
<svg class="a" style="left:460px;top:355px" width="140" height="49" viewBox="460 355 140 49">
<defs><clipPath id="wl"><rect x="-40" y="-20" width="40" height="40"/></clipPath><clipPath id="wr"><rect x="0" y="-20" width="40" height="40"/></clipPath><linearGradient id="wb" x1="0" y1="-12" x2="0" y2="12" gradientUnits="userSpaceOnUse"><stop offset="0" stop-color="#1a2c78"/><stop offset="0.6" stop-color="#1e4aa0"/><stop offset="1" stop-color="#38a0e0"/></linearGradient><linearGradient id="wo" x1="0" y1="-12" x2="0" y2="12" gradientUnits="userSpaceOnUse"><stop offset="0" stop-color="#e8881c"/><stop offset="0.7" stop-color="#e0701c"/><stop offset="1" stop-color="#c86a30"/></linearGradient></defs>
<g transform="translate(494.5 379.2) rotate(-24)">
<path d="M-22 -7.5 A27 12.5 0 0 1 22 -7.5" fill="none" stroke="#d8502c" stroke-width="1"/>
<path d="M-22 7.5 A27 12.5 0 0 0 22 7.5" fill="none" stroke="#3aa0e0" stroke-width="1.1"/>
<path clip-path="url(#wl)" fill-rule="evenodd" fill="url(#wb)" d="M-27 0a27 12.5 0 1 0 54 0a27 12.5 0 1 0 -54 0z M-20.8 0.3a24 11.2 0 1 0 48 0a24 11.2 0 1 0 -48 0z"/>
<path clip-path="url(#wr)" fill-rule="evenodd" fill="url(#wo)" d="M-27 0a27 12.5 0 1 0 54 0a27 12.5 0 1 0 -54 0z M-28 -0.3a24 11.2 0 1 0 48 0a24 11.2 0 1 0 -48 0z"/>
</g>
<circle cx="488" cy="366.4" r="1.8" fill="#2050a8"/>
<text x="477.5" y="390.6" font-family="Liberation Serif,serif" font-style="italic" font-size="30" fill="#1c3a90" textLength="18.5" lengthAdjust="spacingAndGlyphs">X</text>
<text x="494" y="390.6" font-family="Liberation Serif,serif" font-style="italic" font-size="30" fill="#e06c1c" textLength="15.5" lengthAdjust="spacingAndGlyphs">S</text>
<text class="cj" x="523.3" y="380.8" font-size="22.6" font-weight="bold" fill="#1b2150" textLength="67.2" lengthAdjust="spacingAndGlyphs">资料网</text>
<text x="523" y="393.3" font-family="Liberation Mono,monospace" font-weight="bold" font-size="7.3" fill="#1b2150" textLength="68.6" lengthAdjust="spacingAndGlyphs">ZL.XS1616.COM</text>
</svg>
</body></html>
